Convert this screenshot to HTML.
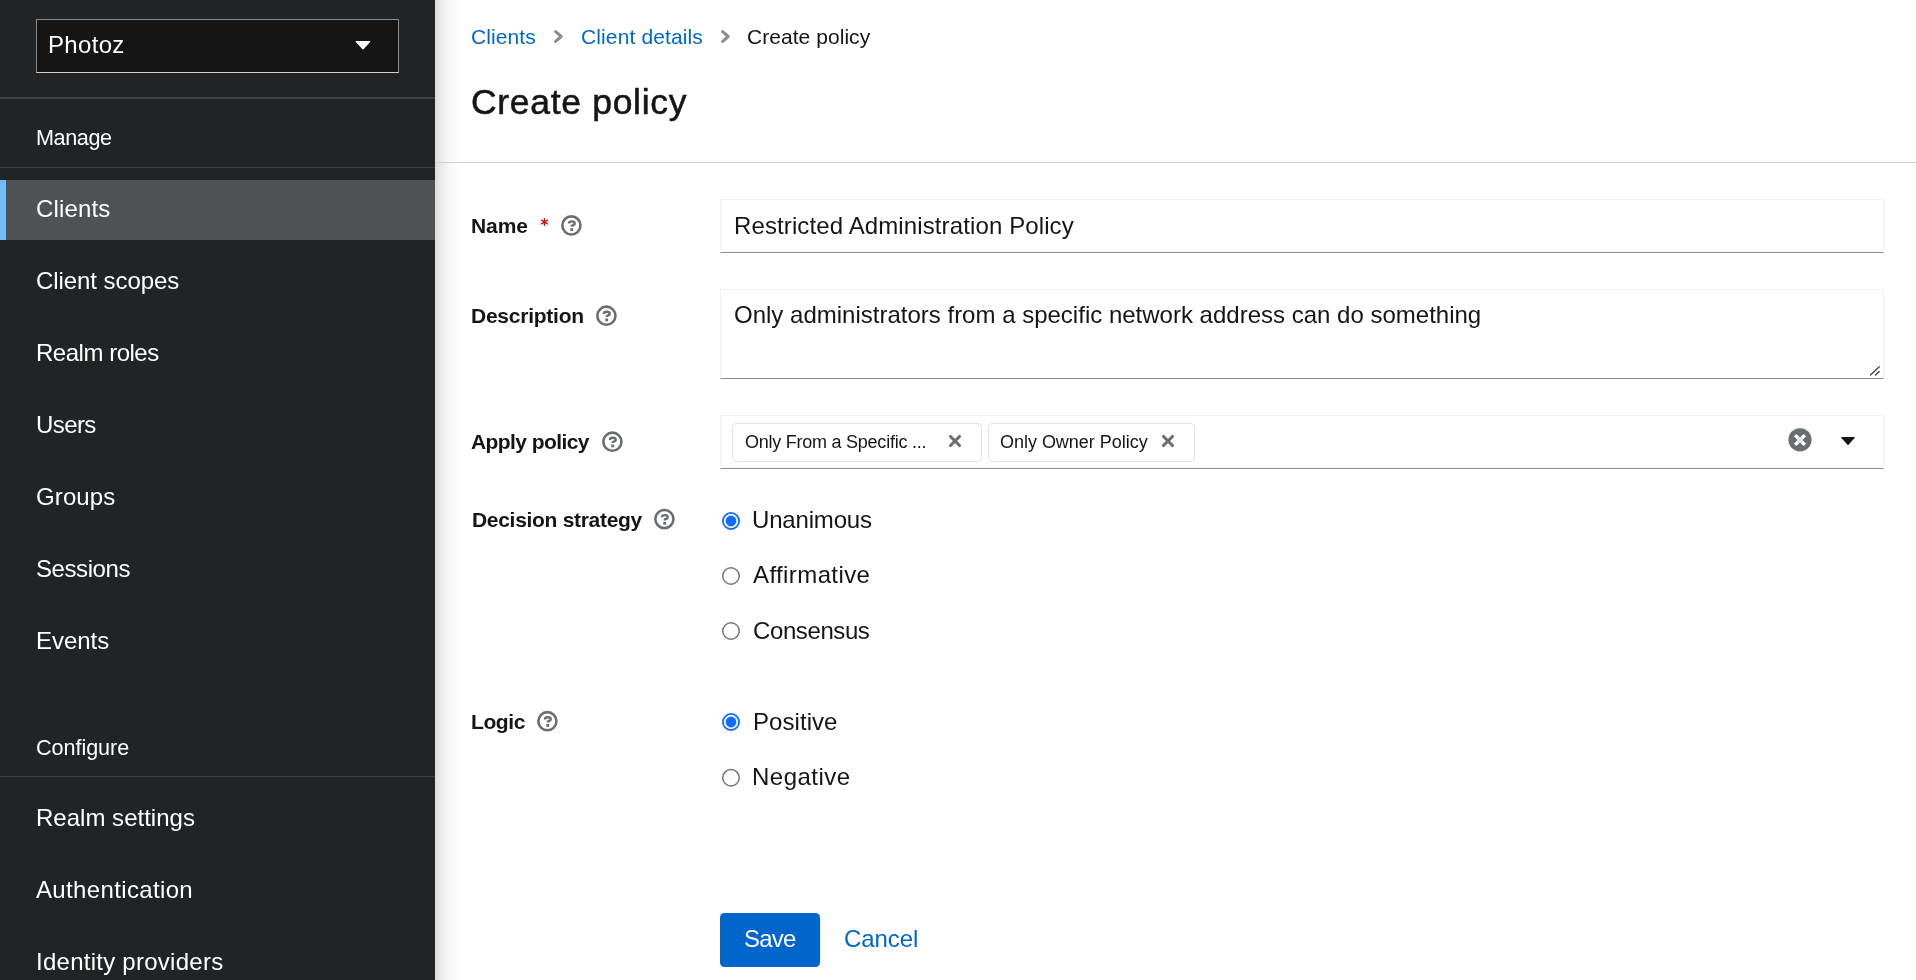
<!DOCTYPE html>
<html><head><meta charset="utf-8">
<style>
*{box-sizing:border-box;margin:0;padding:0}
html,body{width:1916px;height:980px;overflow:hidden;background:#fff;font-family:"Liberation Sans",sans-serif;color:#151515}
.a{position:absolute;white-space:nowrap;line-height:1;will-change:transform}
#side{position:absolute;left:0;top:0;width:435px;height:980px;background:#212427}
#shadow{position:absolute;left:435px;top:0;width:30px;height:980px;background:linear-gradient(to right,#dcdcdc 0px,#e8e8e8 5px,#f1f1f1 10px,#f8f8f8 15px,#fcfcfc 20px,#fff 27px)}
.realm{position:absolute;left:36px;top:19px;width:363px;height:54px;background:#151515;border:1px solid #8a8d90;border-bottom-color:#d2d2d2}
.hr{position:absolute;left:0;width:435px;height:1px;background:#3c3f42}
.nav{color:#fff;font-size:24px}
.sec{color:#fff;font-size:21.6px}
.active{position:absolute;left:0;top:180px;width:435px;height:60px;background:#4f5255}
.active:before{content:"";position:absolute;left:0;top:0;width:6px;height:60px;background:#73bcf7}
.link{color:#0066cc}
.lbl{font-weight:bold;font-size:21px}
.field{position:absolute;left:720px;width:1164px;background:#fff;border:1px solid #f0f0f0;border-bottom-color:#8a8d90}
.chip{position:absolute;top:423px;height:39px;border:1px solid #e2e2e2;border-radius:4.5px;background:#fff}
</style></head><body>
<div id="side">
  <div class="realm"></div>
  <div id="t_photoz" class="a nav" style="left:48.2px;top:33.0px;letter-spacing:0.320px">Photoz</div>
  <div class="hr" style="top:97px;height:2px"></div>
  <div id="t_manage" class="a sec" style="left:35.6px;top:127.0px;letter-spacing:-0.400px">Manage</div>
  <div class="hr" style="top:167px"></div>
  <div class="active"></div>
  <div id="t_clients" class="a nav" style="left:36.0px;top:197.4px;letter-spacing:0.167px">Clients</div>
  <div id="t_cscopes" class="a nav" style="left:36.0px;top:269.0px;letter-spacing:-0.067px">Client scopes</div>
  <div id="t_rroles" class="a nav" style="left:35.9px;top:341.0px;letter-spacing:-0.480px">Realm roles</div>
  <div id="t_users" class="a nav" style="left:36.0px;top:413.0px;letter-spacing:-0.600px">Users</div>
  <div id="t_groups" class="a nav" style="left:36.0px;top:485.0px;letter-spacing:0.120px">Groups</div>
  <div id="t_sessions" class="a nav" style="left:36.0px;top:557.0px;letter-spacing:-0.429px">Sessions</div>
  <div id="t_events" class="a nav" style="left:36.0px;top:629.0px;letter-spacing:-0.040px">Events</div>
  <div id="t_configure" class="a sec" style="left:36.0px;top:737.0px;letter-spacing:-0.050px">Configure</div>
  <div class="hr" style="top:776px"></div>
  <div id="t_rsettings" class="a nav" style="left:36.0px;top:806.0px;letter-spacing:0.016px">Realm settings</div>
  <div id="t_auth" class="a nav" style="left:36.0px;top:878.0px;letter-spacing:0.354px">Authentication</div>
  <div id="t_idp" class="a nav" style="left:36.0px;top:950.0px;letter-spacing:0.258px">Identity providers</div>
</div>
<div id="shadow"></div>
<div id="main">
  <div id="t_bc1" class="a link" style="left:471.4px;top:26.0px;font-size:21px;letter-spacing:0.100px">Clients</div>
  <div id="t_bc2" class="a link" style="left:581.0px;top:26.0px;font-size:21px;letter-spacing:0.124px">Client details</div>
  <div id="t_bc3" class="a" style="left:747.4px;top:26.0px;font-size:21px;letter-spacing:0.050px">Create policy</div>
  <div id="t_title" class="a" style="left:471.3px;top:85.2px;font-size:35.5px;letter-spacing:0.690px;-webkit-text-stroke:0.55px #151515">Create policy</div>
  <div style="position:absolute;left:435px;top:162px;width:1481px;height:1px;background:#d2d2d2"></div>

  <div id="t_name" class="a lbl" style="left:471.0px;top:214.6px;letter-spacing:-0.066px">Name</div>
  <div id="t_desc" class="a lbl" style="left:471.0px;top:305.2px;letter-spacing:-0.240px">Description</div>
  <div id="t_apply" class="a lbl" style="left:471.4px;top:431.0px;letter-spacing:-0.582px">Apply policy</div>
  <div id="t_decision" class="a lbl" style="left:471.6px;top:509.0px;letter-spacing:-0.300px">Decision strategy</div>
  <div id="t_logic" class="a lbl" style="left:471.0px;top:711.0px;letter-spacing:-0.400px">Logic</div>

  <div class="field" style="top:199px;height:54px"></div>
  <div id="t_nameval" class="a" style="left:733.8px;top:214.0px;font-size:24px;letter-spacing:0.116px">Restricted Administration Policy</div>
  <div class="field" style="top:289px;height:90px"></div>
  <div id="t_descval" class="a" style="left:734.4px;top:303.2px;font-size:24px;letter-spacing:0.003px">Only administrators from a specific network address can do something</div>
  <div class="field" style="top:415px;height:54px"></div>
  <div class="chip" style="left:732px;width:250px"></div>
  <div id="t_chip1" class="a" style="left:744.5px;top:433.0px;font-size:18px;letter-spacing:-0.245px">Only From a Specific ...</div>
  <div class="chip" style="left:988px;width:207px"></div>
  <div id="t_chip2" class="a" style="left:1000.2px;top:433.0px;font-size:18px;letter-spacing:-0.025px">Only Owner Policy</div>
  <div id="t_r1" class="a" style="left:752.2px;top:508.0px;font-size:24px;letter-spacing:-0.175px">Unanimous</div>
  <div id="t_r2" class="a" style="left:753.0px;top:563.2px;font-size:24px;letter-spacing:0.400px">Affirmative</div>
  <div id="t_r3" class="a" style="left:752.7px;top:619.0px;font-size:24px;letter-spacing:-0.400px">Consensus</div>
  <div id="t_r4" class="a" style="left:752.6px;top:710.2px;font-size:24px;letter-spacing:0.057px">Positive</div>
  <div id="t_r5" class="a" style="left:752.2px;top:765.0px;font-size:24px;letter-spacing:0.486px">Negative</div>

  <div style="position:absolute;left:720px;top:913px;width:100px;height:54px;background:#0066cc;border-radius:4.5px"></div>
  <div id="t_save" class="a" style="left:743.8px;top:927.0px;font-size:24px;color:#fff;letter-spacing:-0.800px">Save</div>
  <div id="t_cancel" class="a link" style="left:844.0px;top:927.0px;font-size:24px;letter-spacing:-0.080px">Cancel</div>
</div>
<svg style="position:absolute;left:0;top:0" width="1916" height="980" viewBox="0 0 1916 980">
<path d="M356.3 41.6 L369.7 41.6 L363 48.8 Z" fill="#fff" stroke="#fff" stroke-width="1.3" stroke-linejoin="round"/>
<polyline points="555.6,31.6 561.2,36.5 555.6,41.4" fill="none" stroke="#8a8d90" stroke-width="3" stroke-linecap="round" stroke-linejoin="round"/>
<polyline points="722.6,31.6 728.2,36.5 722.6,41.4" fill="none" stroke="#8a8d90" stroke-width="3" stroke-linecap="round" stroke-linejoin="round"/>
<g stroke="#c9190b" stroke-width="1.4" stroke-linecap="round"><path d="M544.5 218.6 L544.5 225.4"/><path d="M541.5 220.2 L547.5 223.8"/><path d="M541.5 223.8 L547.5 220.2"/></g>
<g transform="translate(561,215)"><circle cx="10.4" cy="10.4" r="9.05" fill="none" stroke="#6a6e73" stroke-width="2.6"/><path d="M7.9 8.6 C7.9 6.9 9.2 6.4 10.8 6.4 C12.5 6.4 13.7 7.2 13.7 8.5 C13.7 9.8 12.4 10.2 11.4 10.5 L10.9 10.7 L10.9 11.8" fill="none" stroke="#6a6e73" stroke-width="2.4"/><rect x="9.3" y="13.2" width="2.8" height="2.8" fill="#6a6e73"/></g>
<g transform="translate(596,305.3)"><circle cx="10.4" cy="10.4" r="9.05" fill="none" stroke="#6a6e73" stroke-width="2.6"/><path d="M7.9 8.6 C7.9 6.9 9.2 6.4 10.8 6.4 C12.5 6.4 13.7 7.2 13.7 8.5 C13.7 9.8 12.4 10.2 11.4 10.5 L10.9 10.7 L10.9 11.8" fill="none" stroke="#6a6e73" stroke-width="2.4"/><rect x="9.3" y="13.2" width="2.8" height="2.8" fill="#6a6e73"/></g>
<g transform="translate(602,431.3)"><circle cx="10.4" cy="10.4" r="9.05" fill="none" stroke="#6a6e73" stroke-width="2.6"/><path d="M7.9 8.6 C7.9 6.9 9.2 6.4 10.8 6.4 C12.5 6.4 13.7 7.2 13.7 8.5 C13.7 9.8 12.4 10.2 11.4 10.5 L10.9 10.7 L10.9 11.8" fill="none" stroke="#6a6e73" stroke-width="2.4"/><rect x="9.3" y="13.2" width="2.8" height="2.8" fill="#6a6e73"/></g>
<g transform="translate(654,508.7)"><circle cx="10.4" cy="10.4" r="9.05" fill="none" stroke="#6a6e73" stroke-width="2.6"/><path d="M7.9 8.6 C7.9 6.9 9.2 6.4 10.8 6.4 C12.5 6.4 13.7 7.2 13.7 8.5 C13.7 9.8 12.4 10.2 11.4 10.5 L10.9 10.7 L10.9 11.8" fill="none" stroke="#6a6e73" stroke-width="2.4"/><rect x="9.3" y="13.2" width="2.8" height="2.8" fill="#6a6e73"/></g>
<g transform="translate(537,710.8)"><circle cx="10.4" cy="10.4" r="9.05" fill="none" stroke="#6a6e73" stroke-width="2.6"/><path d="M7.9 8.6 C7.9 6.9 9.2 6.4 10.8 6.4 C12.5 6.4 13.7 7.2 13.7 8.5 C13.7 9.8 12.4 10.2 11.4 10.5 L10.9 10.7 L10.9 11.8" fill="none" stroke="#6a6e73" stroke-width="2.4"/><rect x="9.3" y="13.2" width="2.8" height="2.8" fill="#6a6e73"/></g>
<path d="M950.5 436.5 L959.5 445.5 M959.5 436.5 L950.5 445.5" stroke="#6a6e73" stroke-width="3.1" stroke-linecap="round" fill="none"/>
<path d="M1163.5 436.5 L1172.5 445.5 M1172.5 436.5 L1163.5 445.5" stroke="#6a6e73" stroke-width="3.1" stroke-linecap="round" fill="none"/>
<circle cx="1800" cy="439.8" r="11.6" fill="#6a6e73"/>
<path d="M1795.1 435.1 L1804.9 444.9 M1804.9 435.1 L1795.1 444.9" stroke="#fff" stroke-width="3.4" stroke-linecap="butt" fill="none"/>
<path d="M1841.8 437.6 L1854.2 437.6 L1848 444.4 Z" fill="#151515" stroke="#151515" stroke-width="1.2" stroke-linejoin="round"/>
<g stroke="#444" stroke-width="1.3" stroke-linecap="round"><path d="M1870.5 375 L1879.3 366.8"/><path d="M1875.6 375 L1879.3 371.6"/></g>
<circle cx="731" cy="521" r="8.1" fill="#fff" stroke="#106cff" stroke-width="1.8"/><circle cx="731" cy="521" r="5.4" fill="#106cff"/>
<circle cx="731" cy="576" r="8.25" fill="#fff" stroke="#767676" stroke-width="1.5"/>
<circle cx="731" cy="631" r="8.25" fill="#fff" stroke="#767676" stroke-width="1.5"/>
<circle cx="731" cy="722" r="8.1" fill="#fff" stroke="#106cff" stroke-width="1.8"/><circle cx="731" cy="722" r="5.4" fill="#106cff"/>
<circle cx="731" cy="777.7" r="8.25" fill="#fff" stroke="#767676" stroke-width="1.5"/>
</svg>
</body></html>
